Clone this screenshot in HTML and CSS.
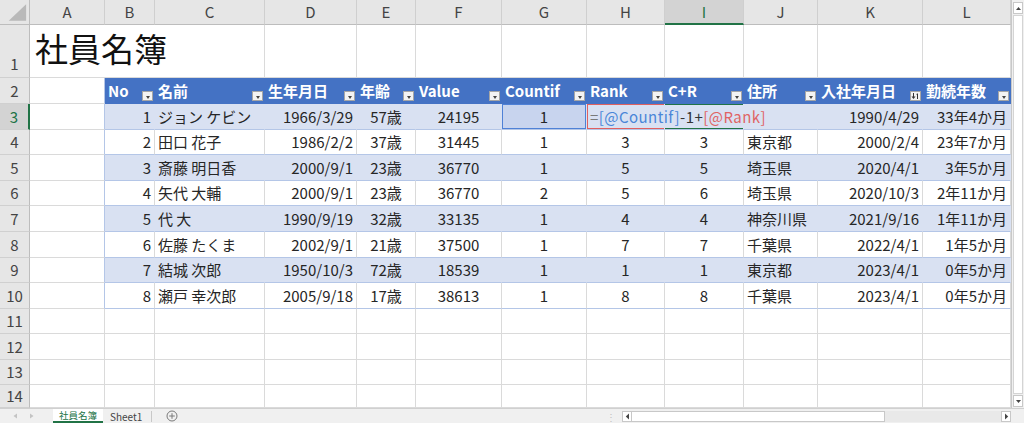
FILE: index.html
```html
<!DOCTYPE html>
<html lang="ja">
<head>
<meta charset="utf-8">
<title>社員名簿</title>
<link rel="stylesheet" href="styles.css">
</head>
<body>
<div class="app">
  <div class="main">
    <div class="sheet">
      <!-- column headers -->
      <div class="c corner"><svg width="30" height="25" viewBox="0 0 30 25"><polygon points="27,4 27,21 9,21" fill="#b9b9b9"/></svg></div>
      <div class="c ch">A</div>
      <div class="c ch">B</div>
      <div class="c ch">C</div>
      <div class="c ch">D</div>
      <div class="c ch">E</div>
      <div class="c ch">F</div>
      <div class="c ch">G</div>
      <div class="c ch">H</div>
      <div class="c ch sel">I</div>
      <div class="c ch">J</div>
      <div class="c ch">K</div>
      <div class="c ch">L</div>

      <!-- row 1 -->
      <div class="c rh rh1">1</div>
      <div class="c title">社員名簿</div>
      <div class="c"></div><div class="c"></div><div class="c"></div><div class="c"></div><div class="c"></div>
      <div class="c"></div><div class="c"></div><div class="c"></div><div class="c"></div>

      <!-- row 2 : table header -->
      <div class="c rh">2</div>
      <div class="c ta"></div>
      <div class="c th">No<span class="fb"></span></div>
      <div class="c th">名前<span class="fb"></span></div>
      <div class="c th">生年月日<span class="fb"></span></div>
      <div class="c th">年齢<span class="fb"></span></div>
      <div class="c th">Value<span class="fb"></span></div>
      <div class="c th">Countif<span class="fb"></span></div>
      <div class="c th">Rank<span class="fb"></span></div>
      <div class="c th">C+R<span class="fb"></span></div>
      <div class="c th">住所<span class="fb"></span></div>
      <div class="c th">入社年月日<span class="fb sort"><svg width="9" height="8" viewBox="0 0 9 8"><path d="M2.5 1v5" stroke="#333" stroke-width="1"/><path d="M0.5 4.5h4l-2 2.5z" fill="#333"/><path d="M6.5 2v5" stroke="#333" stroke-width="1"/><path d="M5.5 2.5l1-1.2" stroke="#333" stroke-width="0.8"/></svg></span></div>
      <div class="c th">勤続年数<span class="fb"></span></div>

      <!-- row 3 -->
      <div class="c rh sel">3</div>
      <div class="c ta"></div>
      <div class="c b r">1</div>
      <div class="c b">ジョン ケビン</div>
      <div class="c b r">1966/3/29</div>
      <div class="c b m">57歳</div>
      <div class="c b m">24195</div>
      <div class="c b m g3">1</div>
      <div class="c b h3"><span class="fx"><span class="f-eq">=</span><span class="f-blue">[@Countif]</span>-1+<span class="f-red">[@Rank]</span></span></div>
      <div class="c b i3"></div>
      <div class="c b"></div>
      <div class="c b r">1990/4/29</div>
      <div class="c b r">33年4か月</div>

      <!-- row 4 -->
      <div class="c rh">4</div>
      <div class="c ta"></div>
      <div class="c w r">2</div>
      <div class="c w">田口 花子</div>
      <div class="c w r">1986/2/2</div>
      <div class="c w m">37歳</div>
      <div class="c w m">31445</div>
      <div class="c w m">1</div>
      <div class="c w m">3</div>
      <div class="c w m">3</div>
      <div class="c w">東京都</div>
      <div class="c w r">2000/2/4</div>
      <div class="c w r">23年7か月</div>

      <!-- row 5 -->
      <div class="c rh">5</div>
      <div class="c ta"></div>
      <div class="c b r">3</div>
      <div class="c b">斎藤 明日香</div>
      <div class="c b r">2000/9/1</div>
      <div class="c b m">23歳</div>
      <div class="c b m">36770</div>
      <div class="c b m">1</div>
      <div class="c b m">5</div>
      <div class="c b m">5</div>
      <div class="c b">埼玉県</div>
      <div class="c b r">2020/4/1</div>
      <div class="c b r">3年5か月</div>

      <!-- row 6 -->
      <div class="c rh">6</div>
      <div class="c ta"></div>
      <div class="c w r">4</div>
      <div class="c w">矢代 大輔</div>
      <div class="c w r">2000/9/1</div>
      <div class="c w m">23歳</div>
      <div class="c w m">36770</div>
      <div class="c w m">2</div>
      <div class="c w m">5</div>
      <div class="c w m">6</div>
      <div class="c w">埼玉県</div>
      <div class="c w r">2020/10/3</div>
      <div class="c w r">2年11か月</div>

      <!-- row 7 -->
      <div class="c rh">7</div>
      <div class="c ta"></div>
      <div class="c b r">5</div>
      <div class="c b">代 大</div>
      <div class="c b r">1990/9/19</div>
      <div class="c b m">32歳</div>
      <div class="c b m">33135</div>
      <div class="c b m">1</div>
      <div class="c b m">4</div>
      <div class="c b m">4</div>
      <div class="c b">神奈川県</div>
      <div class="c b r">2021/9/16</div>
      <div class="c b r">1年11か月</div>

      <!-- row 8 -->
      <div class="c rh">8</div>
      <div class="c ta"></div>
      <div class="c w r">6</div>
      <div class="c w">佐藤 たくま</div>
      <div class="c w r">2002/9/1</div>
      <div class="c w m">21歳</div>
      <div class="c w m">37500</div>
      <div class="c w m">1</div>
      <div class="c w m">7</div>
      <div class="c w m">7</div>
      <div class="c w">千葉県</div>
      <div class="c w r">2022/4/1</div>
      <div class="c w r">1年5か月</div>

      <!-- row 9 -->
      <div class="c rh">9</div>
      <div class="c ta"></div>
      <div class="c b r">7</div>
      <div class="c b">結城 次郎</div>
      <div class="c b r">1950/10/3</div>
      <div class="c b m">72歳</div>
      <div class="c b m">18539</div>
      <div class="c b m">1</div>
      <div class="c b m">1</div>
      <div class="c b m">1</div>
      <div class="c b">東京都</div>
      <div class="c b r">2023/4/1</div>
      <div class="c b r">0年5か月</div>

      <!-- row 10 -->
      <div class="c rh">10</div>
      <div class="c ta"></div>
      <div class="c w r">8</div>
      <div class="c w">瀬戸 幸次郎</div>
      <div class="c w r">2005/9/18</div>
      <div class="c w m">17歳</div>
      <div class="c w m">38613</div>
      <div class="c w m">1</div>
      <div class="c w m">8</div>
      <div class="c w m">8</div>
      <div class="c w">千葉県</div>
      <div class="c w r">2023/4/1</div>
      <div class="c w r">0年5か月</div>

      <!-- rows 11-14 -->
      <div class="c rh">11</div>
      <div class="c"></div><div class="c"></div><div class="c"></div><div class="c"></div><div class="c"></div><div class="c"></div>
      <div class="c"></div><div class="c"></div><div class="c"></div><div class="c"></div><div class="c"></div><div class="c"></div>
      <div class="c rh">12</div>
      <div class="c"></div><div class="c"></div><div class="c"></div><div class="c"></div><div class="c"></div><div class="c"></div>
      <div class="c"></div><div class="c"></div><div class="c"></div><div class="c"></div><div class="c"></div><div class="c"></div>
      <div class="c rh">13</div>
      <div class="c"></div><div class="c"></div><div class="c"></div><div class="c"></div><div class="c"></div><div class="c"></div>
      <div class="c"></div><div class="c"></div><div class="c"></div><div class="c"></div><div class="c"></div><div class="c"></div>
      <div class="c rh">14</div>
      <div class="c"></div><div class="c"></div><div class="c"></div><div class="c"></div><div class="c"></div><div class="c"></div>
      <div class="c"></div><div class="c"></div><div class="c"></div><div class="c"></div><div class="c"></div><div class="c"></div>
    </div>

    <div class="vscroll">
      <div class="vbtn"><svg width="7" height="5" viewBox="0 0 7 5"><path d="M3.5 1L6 4H1z" fill="#444"/></svg></div>
      <div class="vthumb"></div>
      <div class="vbtn"><svg width="7" height="5" viewBox="0 0 7 5"><path d="M1 1h5L3.5 4z" fill="#444"/></svg></div>
    </div>
  </div>

  <div class="tabbar">
    <div class="nav">
      <svg width="5" height="6" viewBox="0 0 5 6"><path d="M4 0.5v5L0.5 3z" fill="#c4c4c4"/></svg>
      <svg width="5" height="6" viewBox="0 0 5 6"><path d="M1 0.5v5L4.5 3z" fill="#c4c4c4"/></svg>
    </div>
    <div class="tab active">社員名簿</div>
    <div class="tab">Sheet1</div>
    <div class="tsep"></div>
    <div class="addsheet"><svg width="12" height="12" viewBox="0 0 12 12"><circle cx="6" cy="6" r="5" fill="none" stroke="#7a7a7a" stroke-width="1"/><path d="M6 3.2v5.6M3.2 6h5.6" stroke="#7a7a7a" stroke-width="1"/></svg></div>
    <div class="spacer"></div>
    <div class="grip">⋮</div>
    <div class="hscroll">
      <div class="hbtn"><svg width="5" height="7" viewBox="0 0 5 7"><path d="M4 0.5v6L0.8 3.5z" fill="#444"/></svg></div>
      <div class="hthumb"></div>
      <div class="htrack"></div>
      <div class="hbtn"><svg width="5" height="7" viewBox="0 0 5 7"><path d="M1 0.5v6L4.2 3.5z" fill="#444"/></svg></div>
    </div>
  </div>
</div>
</body>
</html>
```

FILE: styles.css
```css
* { box-sizing: border-box; margin: 0; padding: 0; }
html, body { width: 1024px; height: 423px; overflow: hidden; background: #fff; }
body {
  font-family: "Noto Sans CJK JP", "Noto Sans", sans-serif;
  font-size: 15px;
  color: #262626;
}
.app { display: flex; flex-direction: column; height: 423px; }
.main { display: flex; height: 408px; }

.sheet {
  display: grid;
  grid-template-columns: 30px 75px 50px 110px 92px 59px 86px 85px 78px 79px 74px 105px 88px;
  grid-template-rows: 25px 53px 26px 26px 25px 26px 25px 26px 26px 25px 26px 25px 26px 25px 23px;
  width: 1011px;
  height: 408px;
  overflow: hidden;
}

.c {
  display: flex;
  align-items: center;
  border-right: 1px solid #dadada;
  border-bottom: 1px solid #dadada;
  padding: 0 3px;
  white-space: nowrap;
  line-height: 20px;
  min-width: 0;
  position: relative;
}

.corner {
  background: #e6e6e6;
  border-right-color: #bdbdbd;
  border-bottom-color: #bdbdbd;
  padding: 0;
}
.corner svg { display: block; }

.ch {
  background: #e6e6e6;
  border-right-color: #cfcfcf;
  border-bottom-color: #bdbdbd;
  justify-content: center;
  color: #444;
}
.ch.sel {
  background: #d3d3d3;
  color: #217346;
  border-bottom: 2px solid #217346;
}

.rh {
  background: #e6e6e6;
  border-right-color: #bdbdbd;
  border-bottom-color: #d0d0d0;
  justify-content: center;
  color: #444;
  padding: 0;
}
.rh1 { align-items: flex-end; padding-bottom: 3px; }
.rh.sel {
  background: #d3d3d3;
  color: #217346;
  border-right: 2px solid #217346;
}

.title {
  grid-column: span 3;
  font-size: 33px;
  line-height: 40px;
  padding: 0 0 6px 5px;
  color: #111;
}

.ta { border-right-color: #b4c6e7; }

.th {
  background: #4472c4;
  color: #fff;
  font-weight: bold;
  border-right-color: #4472c4;
  border-bottom-color: #4472c4;
}
.fb {
  position: absolute;
  right: 1px;
  bottom: 2px;
  width: 11px;
  height: 10px;
  background: #f3f3f3;
  border: 1px solid #a6a6a6;
  display: flex;
  align-items: center;
  justify-content: center;
}
.fb::after {
  content: "";
  margin-top: 2px;
  border-left: 2.5px solid transparent;
  border-right: 2.5px solid transparent;
  border-top: 3px solid #444;
}
.fb.sort::after { display: none; }
.fb.sort svg { display: block; }

.b {
  background: #d9e1f2;
  border-right-color: #d9e1f2;
  border-bottom-color: #b4c6e7;
}
.w { border-bottom-color: #b4c6e7; }

.r { justify-content: flex-end; }
.m { justify-content: center; }

.g3 {
  background: #c8d4ee;
  box-shadow: inset 1px 0 0 #4f81d6, inset 0 -1px 0 #4f81d6, inset -1px 0 0 #4f81d6, inset 0 1px 0 #4f81d6;
}
.h3 {
  z-index: 2;
  overflow: visible;
  box-shadow: inset 1px 0 0 #e06060, inset 0 1px 0 #e06060, inset 0 -1px 0 #e06060;
}
.i3 {
  box-shadow: inset 0 1px 0 #217346, inset 0 -1px 0 #217346;
}
.fx { color: #333; letter-spacing: 0.45px; }
.f-eq { color: #7a7a7a; }
.f-blue { color: #4a86d8; }
.f-red { color: #e06464; }

/* vertical scrollbar */
.vscroll {
  width: 13px;
  height: 408px;
  background: #f0f0f0;
  border-left: 1px solid #c8c8c8;
  display: flex;
  flex-direction: column;
  padding: 2px 1px 1px 1px;
  gap: 1px;
}
.vbtn {
  height: 12px;
  background: #fff;
  border: 1px solid #c8c8c8;
  display: flex;
  align-items: center;
  justify-content: center;
}
.vbtn svg { display: block; }
.vthumb {
  flex: 1;
  background: #fff;
  border: 1px solid #d4d4d4;
}

/* sheet tabs */
.tabbar {
  height: 15px;
  background: #f0f0f0;
  border-top: 1px solid #d0d0d0;
  display: flex;
  align-items: stretch;
  font-size: 10px;
  line-height: 13px;
  color: #444;
  white-space: nowrap;
}
.nav {
  width: 53px;
  display: flex;
  align-items: center;
  gap: 11px;
  padding-left: 13px;
}
.nav svg { display: block; }
.tab {
  display: flex;
  align-items: center;
  padding: 0 7px;
}
.tab.active {
  width: 50px;
  padding: 0;
  justify-content: center;
  background: #fff;
  color: #217346;
  font-size: 9.5px;
  border-bottom: 2px solid #217346;
}
.tsep {
  width: 1px;
  margin: 2px 0 1px 2px;
  background: #c8c8c8;
}
.addsheet {
  display: flex;
  align-items: center;
  padding-left: 14px;
}
.addsheet svg { display: block; }
.spacer { flex: 1; }
.grip {
  display: flex;
  align-items: center;
  color: #c0c0c0;
  font-size: 10px;
  padding-right: 6px;
}
.hscroll {
  width: 389px;
  display: flex;
  padding: 2px 0 1px;
  margin-right: 13px;
}
.hbtn {
  width: 10px;
  background: #fff;
  border: 1px solid #c8c8c8;
  display: flex;
  align-items: center;
  justify-content: center;
}
.hbtn svg { display: block; }
.hthumb {
  width: 253px;
  background: #fff;
  border: 1px solid #c8c8c8;
  border-left: none;
}
.htrack { flex: 1; background: #e9e9e9; }
```
